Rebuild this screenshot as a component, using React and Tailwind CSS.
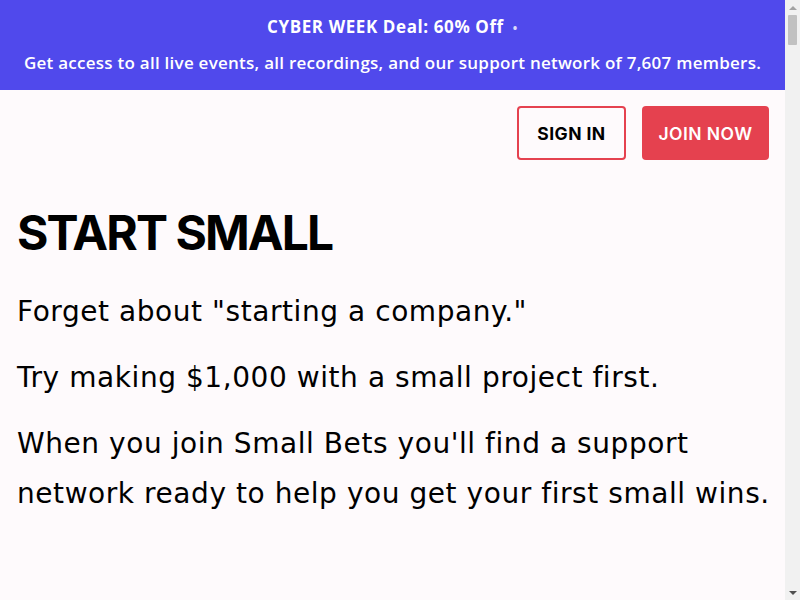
import React from 'react';

const body = { fontFamily: '"DejaVu Sans", "Open Sans", sans-serif' };
const banner = { fontFamily: '"Open Sans", "Noto Sans", sans-serif' };
const display = { fontFamily: 'Inter, "Noto Sans", sans-serif' };

function Scrollbar() {
  return (
    <div className="w-[15px] shrink-0 bg-[#f1f1f1] flex flex-col items-center">
      <div className="h-[15px] flex items-center justify-center">
        <div className="w-0 h-0 border-x-[4px] border-x-transparent border-b-[4px] border-b-[#a3a3a3]" />
      </div>
      <div className="w-[9px] h-[30px] rounded-[1px] bg-[#c1c1c1]" />
      <div className="flex-1" />
      <div className="h-[15px] flex items-center justify-center">
        <div className="w-0 h-0 border-x-[4px] border-x-transparent border-t-[4px] border-t-[#505050]" />
      </div>
    </div>
  );
}

export default function App() {
  return (
    <div className="h-screen flex bg-[#fefafc] text-black overflow-hidden">
      <div className="flex-1 min-w-0">
        {/* promo banner */}
        <div
          className="h-[90px] bg-[#5049ec] text-white flex flex-col items-center justify-center gap-[14px]"
          style={banner}
        >
          <p className="text-[17px] font-bold leading-5 tracking-[0.035em]">
            CYBER WEEK Deal: 60% Off <span className="ml-1 text-[12px] align-middle opacity-80">•</span>
          </p>
          <p className="text-[17px] font-semibold leading-5 tracking-[0.015em]">
            Get access to all live events, all recordings, and our support network of 7,607 members.
          </p>
        </div>

        {/* header */}
        <div className="flex justify-end gap-4 pt-4 pr-4">
          <button
            className="w-[109px] h-[54px] pt-[2px] rounded border-2 border-[#e5414f] text-[17.5px] font-bold tracking-wide"
            style={display}
          >
            SIGN IN
          </button>
          <button
            className="w-[127px] h-[54px] pt-[2px] rounded bg-[#e5414f] text-white text-[17.5px] font-semibold tracking-wide"
            style={display}
          >
            JOIN NOW
          </button>
        </div>

        {/* hero */}
        <div className="pl-[17px] pr-[10px] pt-[46px]">
          <h1 className="text-[48px] leading-[54px] font-bold tracking-[-0.04em]" style={display}>
            START SMALL
          </h1>
          <div
            className="mt-[27px] flex flex-col gap-[16px] text-[28px] leading-[50px] tracking-[0.02em]"
            style={body}
          >
            <p>Forget about "starting a company."</p>
            <p>Try making $1,000 with a small project first.</p>
            <p>
              When you join Small Bets you'll find a support network ready to help you get your first small wins.
            </p>
          </div>
        </div>
      </div>
      <Scrollbar />
    </div>
  );
}
